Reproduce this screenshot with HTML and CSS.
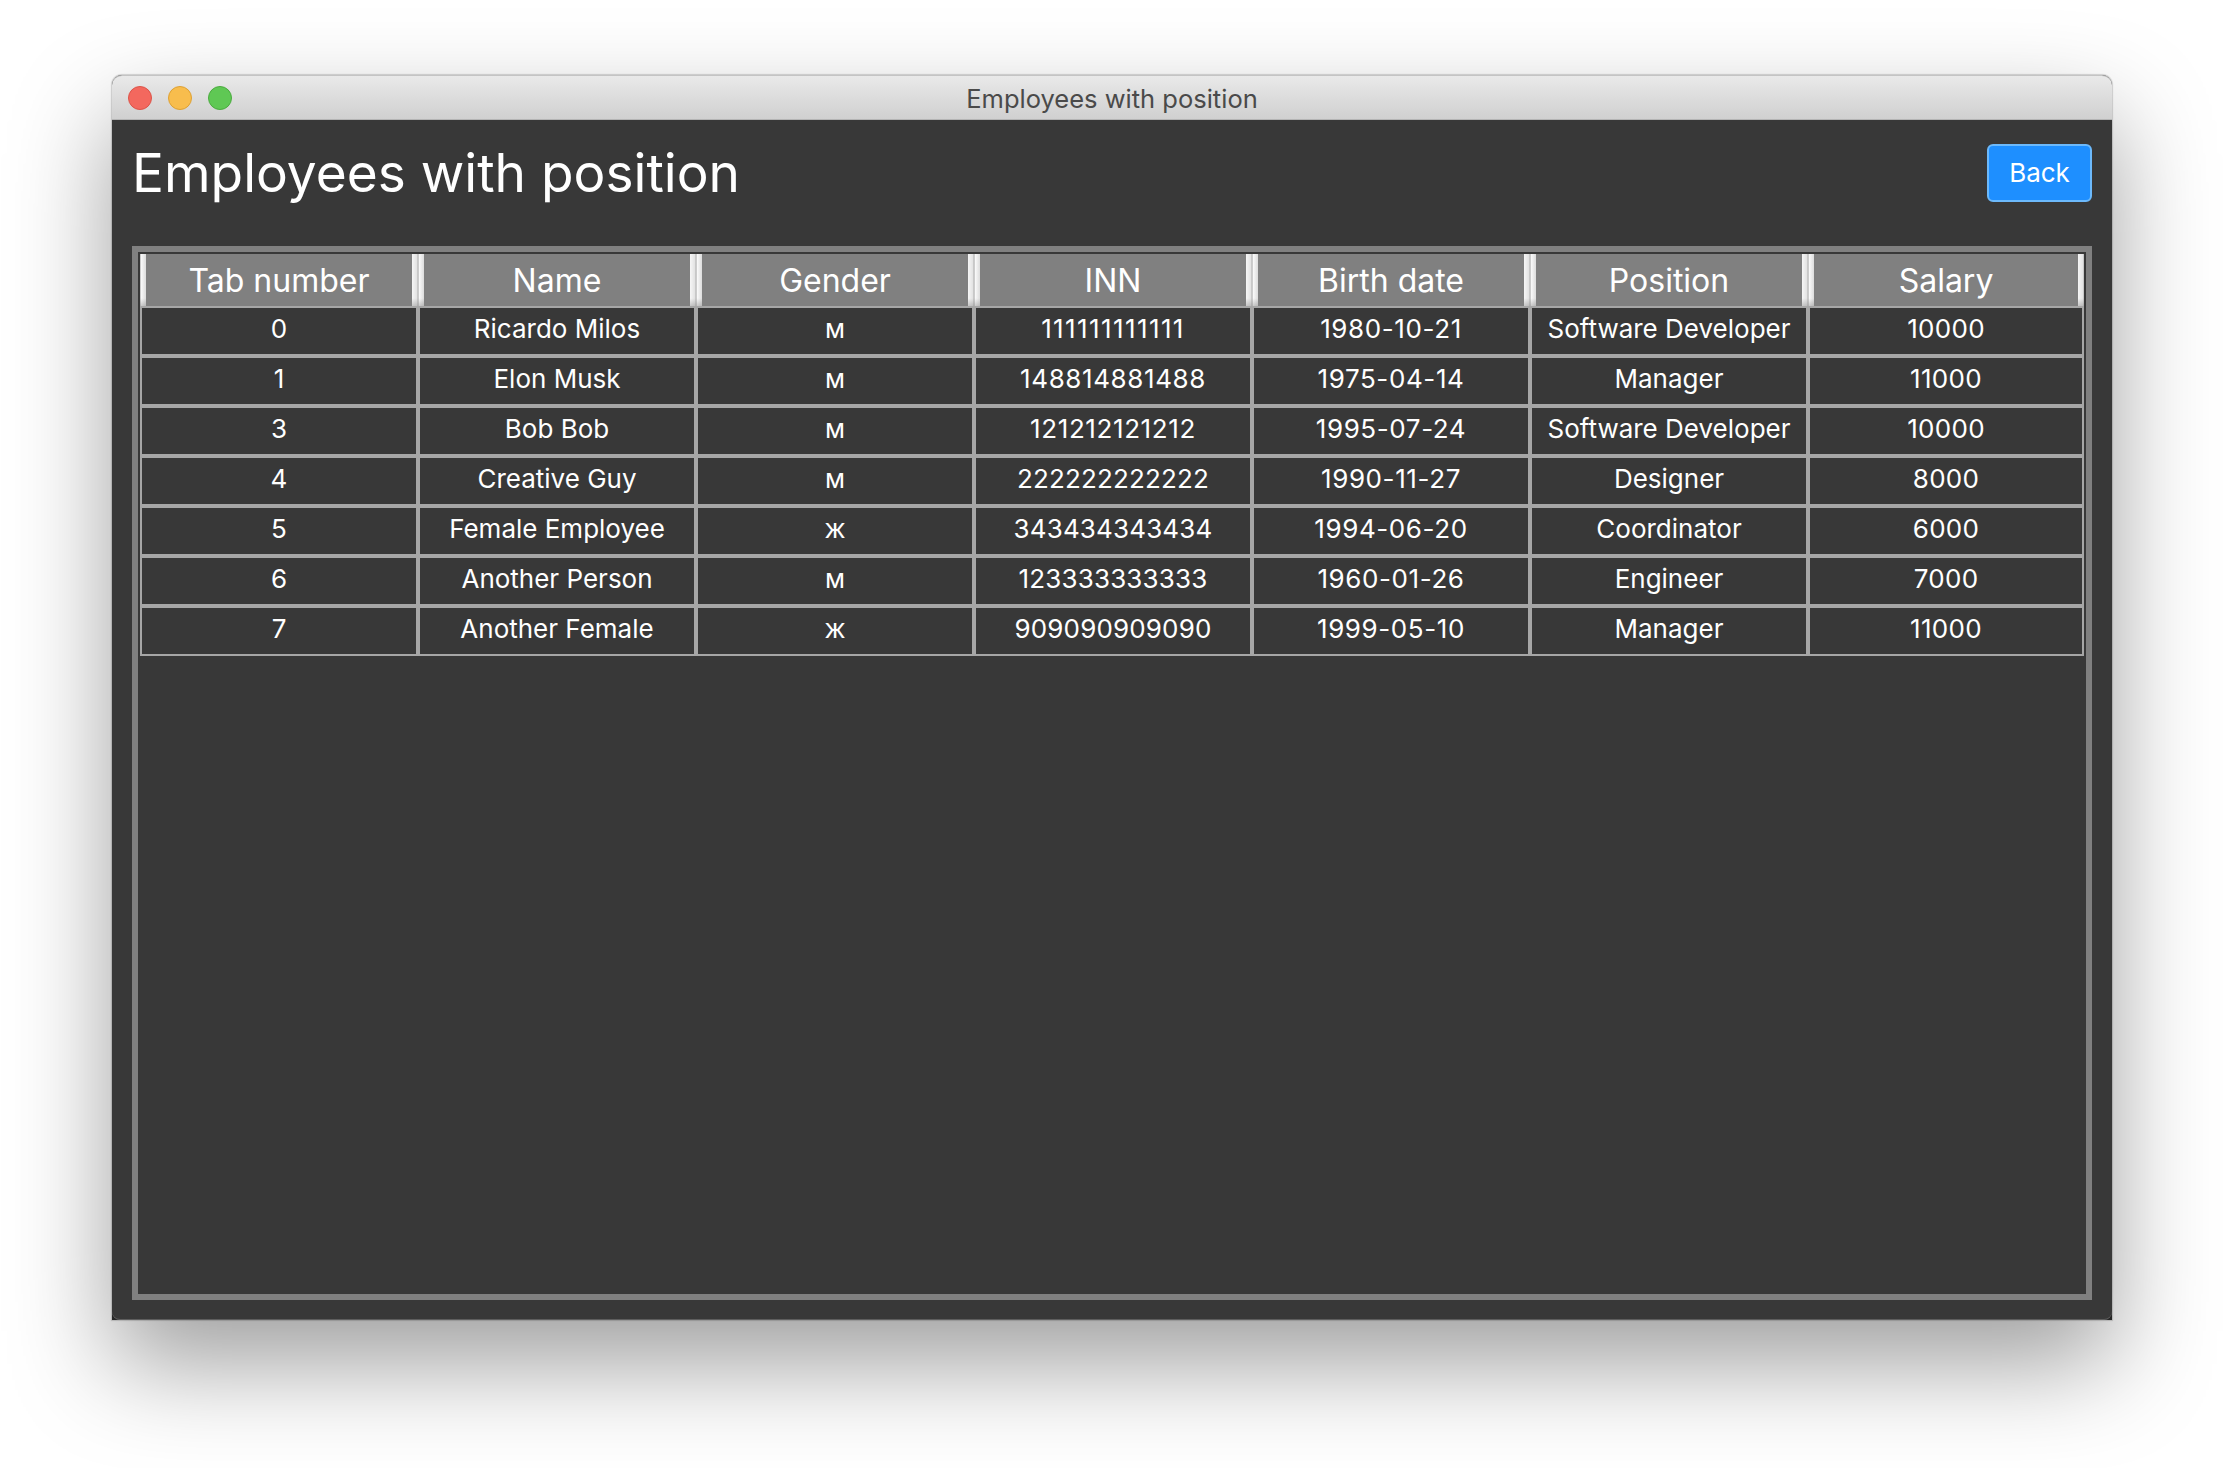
FILE: index.html
```html
<!DOCTYPE html>
<html lang="en">
<head>
<meta charset="utf-8">
<title>Employees with position</title>
<link rel="stylesheet" href="styles.css">
</head>
<body>
<div class="window">
  <header class="titlebar">
    <div class="lights">
      <span class="light red"></span>
      <span class="light yellow"></span>
      <span class="light green"></span>
    </div>
    <div class="window-title">Employees with position</div>
  </header>
  <main class="content">
    <div class="top">
      <h1 class="heading">Employees with position</h1>
      <button class="back">Back</button>
    </div>
    <div class="panel">
      <table class="grid">
        <colgroup>
          <col class="c"><col class="c"><col class="c"><col class="c"><col class="c"><col class="c"><col class="c-last">
        </colgroup>
        <thead>
          <tr><th>Tab number</th><th>Name</th><th>Gender</th><th>INN</th><th>Birth date</th><th>Position</th><th>Salary</th></tr>
        </thead>
        <tbody>
          <tr><td>0</td><td>Ricardo Milos</td><td>м</td><td class="ones">111111111111</td><td class="num">1980-10-21</td><td>Software Developer</td><td class="sal">10000</td></tr>
          <tr><td>1</td><td>Elon Musk</td><td>м</td><td class="num">148814881488</td><td class="num">1975-04-14</td><td>Manager</td><td class="sal">11000</td></tr>
          <tr><td>3</td><td>Bob Bob</td><td>м</td><td class="num">121212121212</td><td class="num">1995-07-24</td><td>Software Developer</td><td class="sal">10000</td></tr>
          <tr><td>4</td><td>Creative Guy</td><td>м</td><td class="inn">222222222222</td><td class="num">1990-11-27</td><td>Designer</td><td class="sal">8000</td></tr>
          <tr><td>5</td><td>Female Employee</td><td>ж</td><td class="inn">343434343434</td><td class="num">1994-06-20</td><td>Coordinator</td><td class="sal">6000</td></tr>
          <tr><td>6</td><td>Another Person</td><td>м</td><td class="inn">123333333333</td><td class="num">1960-01-26</td><td>Engineer</td><td class="sal">7000</td></tr>
          <tr><td>7</td><td>Another Female</td><td>ж</td><td class="inn">909090909090</td><td class="num">1999-05-10</td><td>Manager</td><td class="sal">11000</td></tr>
        </tbody>
      </table>
    </div>
  </main>
</div>
</body>
</html>
```
FILE: styles.css
```css
* { box-sizing: border-box; }
html, body { margin: 0; height: 100%; }
body {
  background: #fff;
  padding: 75px 112px 148px;
  font-family: Inter, "Noto Sans", sans-serif;
  overflow: hidden;
}
.window {
  height: 1245px;
  display: flex;
  flex-direction: column;
  border-radius: 10px 10px 0 0;
  background: #262626;
  box-shadow: 0 44px 100px rgba(0,0,0,.38), 0 0 1px 1px rgba(0,0,0,.16);
}
.titlebar {
  height: 45px;
  flex: none;
  display: flex;
  align-items: center;
  justify-content: center;
  padding-top: 2px;
  background: linear-gradient(#e9e9e9, #d0d0d0);
  border-radius: 10px 10px 0 0;
  border-top: 1px solid #c4c4c4;
  border-bottom: 1px solid #b4b4b4;
  position: relative;
}
.lights {
  position: absolute;
  left: 16px;
  top: 10px;
  display: flex;
  gap: 16px;
}
.light { width: 24px; height: 24px; border-radius: 50%; border: 1px solid; }
.red { background: #f3685e; border-color: #dc5449; }
.yellow { background: #f8bd4d; border-color: #dea134; }
.green { background: #5fc854; border-color: #4bab3f; }
.window-title { font-size: 25.5px; color: #4a4a4a; }
.content {
  flex: 1;
  min-height: 0;
  display: flex;
  flex-direction: column;
  padding: 24px 20px 20px;
  background: #383838;
  border-radius: 0 0 8px 8px;
  box-shadow: inset 0 -1px 0 #5e5e5e;
}
.top {
  display: flex;
  align-items: center;
  justify-content: space-between;
  margin-bottom: 44px;
}
.heading { margin: 0; font-size: 53.2px; font-weight: 400; color: #fff; line-height: 58px; }
.back {
  width: 105px;
  height: 58px;
  padding: 0 0 2px;
  border: 2px solid #6cb9fb;
  border-radius: 6px;
  background: #1e8fff;
  color: #fff;
  font: 26px Inter, "Noto Sans", sans-serif;
}
.panel {
  flex: 1;
  min-height: 0;
  border: 6px solid #808080;
  padding: 2px;
}
.grid {
  width: 1944px;
  table-layout: fixed;
  border-collapse: separate;
  border-spacing: 0;
  color: #fff;
}
.c { width: 278px; }
.c-last { width: 276px; }
.grid th {
  height: 52px;
  padding: 1px 0 0;
  font-weight: 400;
  font-size: 32px;
  background:
    linear-gradient(rgba(128,128,128,0) 85%, rgba(128,128,128,.4)) left top / 6px 100% no-repeat,
    linear-gradient(rgba(128,128,128,0) 85%, rgba(128,128,128,.4)) right top / 6px 100% no-repeat,
    linear-gradient(90deg, #cccccc 1px, #fbfbfb 1px, #dcdcdc) left top / 6px 100% no-repeat,
    linear-gradient(90deg, #f6f6f6, #e2e2e2 5px, #c8c8c8 5px) right top / 6px 100% no-repeat,
    #808080;
}
.grid td {
  height: 50px;
  padding: 0 0 5px;
  text-align: center;
  font-size: 26px;
  border: 2px solid #a6a6a6;
}
.grid .num { letter-spacing: .6px; }
.grid .ones { letter-spacing: 1.4px; }
.grid .inn { letter-spacing: .15px; }
.grid .sal { letter-spacing: .3px; }
```
